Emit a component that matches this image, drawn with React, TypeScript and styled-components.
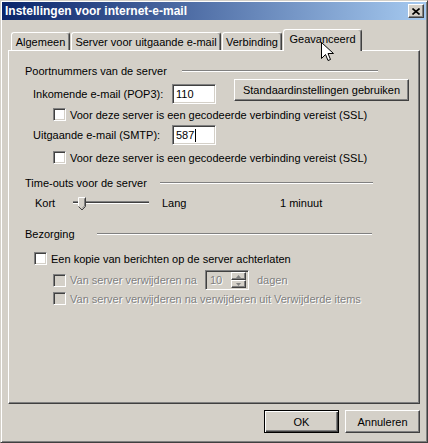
import styled, { createGlobalStyle } from "styled-components";

const GlobalStyle = createGlobalStyle`
  html, body {
    margin: 0;
    padding: 0;
    background: #d4d0c8;
  }
  body {
    font-family: "Liberation Sans", Arial, sans-serif;
    font-size: 11px;
    color: #000;
  }
`;

const Window = styled.div`
  position: relative;
  width: 428px;
  height: 443px;
  box-sizing: border-box;
  background: #d4d0c8;
  border: 1px solid;
  border-color: #d4d0c8 #404040 #404040 #d4d0c8;
  box-shadow: inset 1px 1px #fff, inset -1px -1px #808080;
  padding: 1px;
  display: flex;
  flex-direction: column;
`;

const TitleBar = styled.div`
  height: 18px;
  display: flex;
  align-items: center;
  justify-content: space-between;
  padding: 0 2px 0 3px;
  background: linear-gradient(to right, #0a246a, #a6caf0);
  color: #fff;
  font-weight: bold;
  font-size: 12px;
`;

const CloseButton = styled.div`
  width: 16px;
  height: 14px;
  box-sizing: border-box;
  background: #d4d0c8;
  border: 1px solid;
  border-color: #fff #404040 #404040 #fff;
  box-shadow: inset -1px -1px #808080;
  display: flex;
  align-items: center;
  justify-content: center;
`;

const Body = styled.div`
  flex: 1;
  display: flex;
  flex-direction: column;
  padding: 9px 6px 0 6px;
`;

const TabStrip = styled.div`
  height: 21px;
  display: flex;
  align-items: flex-end;
  gap: 1px;
  padding-left: 3px;
`;

const Tab = styled.div<{ $w: number; $active?: boolean }>`
  position: relative;
  z-index: ${(p) => (p.$active ? 1 : 0)};
  width: ${(p) => p.$w}px;
  height: ${(p) => (p.$active ? 22 : 18)}px;
  margin-bottom: ${(p) => (p.$active ? -1 : 0)}px;
  padding-bottom: ${(p) => (p.$active ? 3 : 0)}px;
  box-sizing: border-box;
  background: #d4d0c8;
  border-top: 1px solid #fff;
  border-left: 1px solid #fff;
  border-right: 1px solid #404040;
  box-shadow: inset -1px 0 #808080;
  border-radius: 3px 3px 0 0;
  display: flex;
  align-items: center;
  justify-content: center;
  white-space: nowrap;
`;

const Panel = styled.div`
  height: 354px;
  box-sizing: border-box;
  border: 1px solid;
  border-color: #fff #404040 #404040 #fff;
  box-shadow: inset -1px -1px #808080;
  display: flex;
  flex-direction: column;
`;

const GroupHeader = styled.div<{ $w: number; $mt: number }>`
  width: ${(p) => p.$w}px;
  height: 14px;
  margin-top: ${(p) => p.$mt}px;
  padding-left: 16px;
  box-sizing: border-box;
  display: flex;
  align-items: center;
  justify-content: space-between;
`;

const Rule = styled.div<{ $w: number }>`
  width: ${(p) => p.$w}px;
  height: 0;
  border-top: 1px solid #808080;
  border-bottom: 1px solid #fff;
`;

const FieldRow = styled.div<{ $mt: number }>`
  height: 20px;
  margin-top: ${(p) => p.$mt}px;
  padding-left: 24px;
  display: flex;
  align-items: center;
`;

const FieldLabel = styled.span`
  width: 139px;
`;

const TextBox = styled.div`
  width: 44px;
  height: 20px;
  box-sizing: border-box;
  background: #fff;
  border: 1px solid;
  border-color: #808080 #fff #fff #808080;
  box-shadow: inset 1px 1px #404040, inset -1px -1px #d4d0c8;
  padding: 0 3px;
  display: flex;
  align-items: center;
`;

const Caret = styled.span`
  display: inline-block;
  width: 1px;
  height: 13px;
  margin-left: 1px;
  background: #000;
`;

const Button = styled.div<{ $w: number; $h: number; $default?: boolean }>`
  width: ${(p) => p.$w}px;
  height: ${(p) => p.$h}px;
  box-sizing: border-box;
  background: #d4d0c8;
  border: 1px solid;
  border-color: ${(p) =>
    p.$default ? "#000" : "#fff #404040 #404040 #fff"};
  box-shadow: ${(p) =>
    p.$default
      ? "inset 1px 1px #fff, inset -1px -1px #404040, inset -2px -2px #808080"
      : "inset -1px -1px #808080"};
  display: flex;
  align-items: center;
  justify-content: center;
  white-space: nowrap;
`;

const SideButton = styled(Button)`
  align-self: flex-start;
  margin-top: -5px;
  margin-left: 18px;
`;

const CheckRow = styled.div<{ $mt: number; $indent: number; $h?: number }>`
  height: ${(p) => p.$h ?? 13}px;
  margin-top: ${(p) => p.$mt}px;
  padding-left: ${(p) => p.$indent}px;
  display: flex;
  align-items: center;
  white-space: nowrap;
`;

const Box = styled.span<{ $disabled?: boolean }>`
  width: 13px;
  height: 13px;
  box-sizing: border-box;
  margin-right: 4px;
  flex: none;
  background: ${(p) => (p.$disabled ? "#d4d0c8" : "#fff")};
  border: 1px solid;
  border-color: #808080 #fff #fff #808080;
  box-shadow: inset 1px 1px #404040, inset -1px -1px #d4d0c8;
`;

const Dim = styled.span<{ $w?: number }>`
  color: #808080;
  text-shadow: 1px 1px #fff;
  ${(p) => (p.$w ? `width: ${p.$w}px;` : "")}
`;

const SliderRow = styled.div`
  height: 20px;
  margin-top: 3px;
  padding-left: 26px;
  display: flex;
  align-items: center;
`;

const Cell = styled.span<{ $w: number; $ml?: number }>`
  width: ${(p) => p.$w}px;
  margin-left: ${(p) => p.$ml ?? 0}px;
  flex: none;
`;

const Spin = styled.div`
  width: 44px;
  height: 20px;
  box-sizing: border-box;
  margin-right: 8px;
  background: #d4d0c8;
  border: 1px solid;
  border-color: #808080 #fff #fff #808080;
  box-shadow: inset 1px 1px #404040, inset -1px -1px #d4d0c8;
  padding: 2px 2px 2px 4px;
  display: flex;
  align-items: center;
  justify-content: space-between;
`;

const SpinButtons = styled.div`
  display: flex;
  flex-direction: column;
  height: 16px;
`;

const SpinButton = styled.div`
  width: 15px;
  height: 8px;
  box-sizing: border-box;
  background: #d4d0c8;
  border: 1px solid;
  border-color: #fff #404040 #404040 #fff;
  box-shadow: inset -1px -1px #808080;
  display: flex;
  align-items: center;
  justify-content: center;
`;

const Footer = styled.div`
  display: flex;
  justify-content: flex-end;
  gap: 6px;
  margin-top: 6px;
`;

const Cursor = styled.svg`
  position: absolute;
  left: 320px;
  top: 41px;
  z-index: 5;
`;

const Slider = () => (
  <svg width="80" height="20" viewBox="0 0 80 20">
    <rect x="0" y="8" width="76" height="1" fill="#808080" />
    <rect x="0" y="9" width="76" height="1" fill="#404040" />
    <rect x="0" y="10" width="76" height="1" fill="#fff" />
    <path d="M5.5 4.5 h7 v9 l-3.5 3.5 l-3.5 -3.5 z" fill="#d4d0c8" />
    <path d="M5.5 13.5 V4.5 H12.5" fill="none" stroke="#fff" />
    <path d="M12.5 4.5 V13.5 L9 17 L5.5 13.5" fill="none" stroke="#404040" />
    <path d="M11.5 5.5 V13 L9 15.5" fill="none" stroke="#808080" />
  </svg>
);

const Arrow = ({ up }: { up?: boolean }) => (
  <svg width="5" height="3" viewBox="0 0 5 3">
    <path d={up ? "M2.5 0 L5 3 H0 Z" : "M0 0 H5 L2.5 3 Z"} fill="#808080" />
  </svg>
);

export default function App() {
  return (
    <>
      <GlobalStyle />
      <Window>
        <TitleBar>
          <span>Instellingen voor internet-e-mail</span>
          <CloseButton>
            <svg width="8" height="7" viewBox="0 0 8 7">
              <path
                d="M0.5 0.5 L7.5 6.5 M7.5 0.5 L0.5 6.5"
                stroke="#000"
                strokeWidth="1.6"
              />
            </svg>
          </CloseButton>
        </TitleBar>
        <Body>
          <TabStrip>
            <Tab $w={59}>Algemeen</Tab>
            <Tab $w={150}>Server voor uitgaande e-mail</Tab>
            <Tab $w={60}>Verbinding</Tab>
            <Tab $w={79} $active>
              Geavanceerd
            </Tab>
          </TabStrip>
          <Panel>
            <GroupHeader $w={369} $mt={13}>
              <span>Poortnummers van de server</span>
              <Rule $w={196} />
            </GroupHeader>
            <FieldRow $mt={6}>
              <FieldLabel>Inkomende e-mail (POP3):</FieldLabel>
              <TextBox>110</TextBox>
              <SideButton $w={175} $h={22}>
                Standaardinstellingen gebruiken
              </SideButton>
            </FieldRow>
            <CheckRow $mt={4} $indent={44}>
              <Box />
              Voor deze server is een gecodeerde verbinding vereist (SSL)
            </CheckRow>
            <FieldRow $mt={4}>
              <FieldLabel>Uitgaande e-mail (SMTP):</FieldLabel>
              <TextBox>
                587
                <Caret />
              </TextBox>
            </FieldRow>
            <CheckRow $mt={6} $indent={44}>
              <Box />
              Voor deze server is een gecodeerde verbinding vereist (SSL)
            </CheckRow>

            <GroupHeader $w={364} $mt={12}>
              <span>Time-outs voor de server</span>
              <Rule $w={213} />
            </GroupHeader>
            <SliderRow>
              <Cell $w={38}>Kort</Cell>
              <Slider />
              <Cell $w={118} $ml={9}>
                Lang
              </Cell>
              <Cell $w={80}>1 minuut</Cell>
            </SliderRow>

            <GroupHeader $w={363} $mt={14}>
              <span>Bezorging</span>
              <Rule $w={275} />
            </GroupHeader>
            <CheckRow $mt={11} $indent={25}>
              <Box />
              Een kopie van berichten op de server achterlaten
            </CheckRow>
            <CheckRow $mt={5} $indent={44} $h={20}>
              <Box $disabled />
              <Dim $w={135}>Van server verwijderen na</Dim>
              <Spin>
                <Dim>10</Dim>
                <SpinButtons>
                  <SpinButton>
                    <Arrow up />
                  </SpinButton>
                  <SpinButton>
                    <Arrow />
                  </SpinButton>
                </SpinButtons>
              </Spin>
              <Dim>dagen</Dim>
            </CheckRow>
            <CheckRow $mt={2} $indent={44}>
              <Box $disabled />
              <Dim>Van server verwijderen na verwijderen uit Verwijderde items</Dim>
            </CheckRow>
          </Panel>
          <Footer>
            <Button $w={75} $h={23} $default>
              OK
            </Button>
            <Button $w={75} $h={23}>
              Annuleren
            </Button>
          </Footer>
        </Body>
        <Cursor width="13" height="21" viewBox="0 0 13 21">
          <path
            d="M0.5 0.5 V16.5 L4.5 12.5 L7 18.5 L9.5 17.5 L7 11.5 H12.5 Z"
            fill="#fff"
            stroke="#000"
            strokeLinejoin="miter"
          />
        </Cursor>
      </Window>
    </>
  );
}
